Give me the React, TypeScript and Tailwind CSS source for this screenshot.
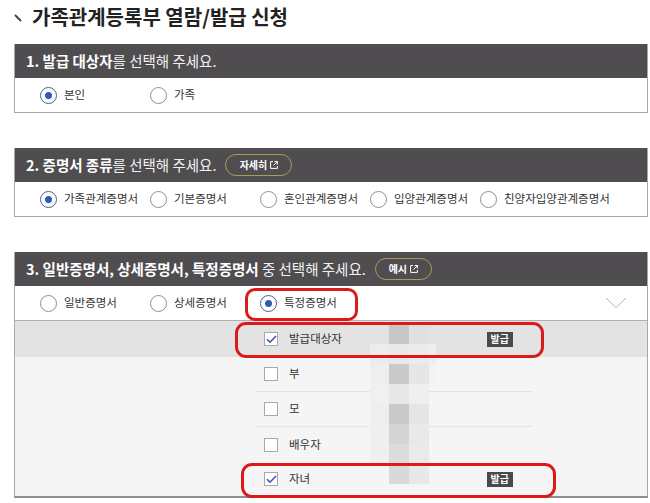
import React from "react";

const FONT = { fontFamily: '"Noto Sans CJK KR", "Noto Sans", sans-serif' };

function Radio({ checked }: { checked?: boolean }) {
  return (
    <span
      className={
        checked
          ? "flex h-[17px] w-[17px] shrink-0 items-center justify-center rounded-full border border-[#4a5f8c] bg-white"
          : "flex h-[17px] w-[17px] shrink-0 items-center justify-center rounded-full border border-[#8f8f8f] bg-white"
      }
    >
      {checked && <span className="h-[7px] w-[7px] rounded-full bg-[#2f5bb5]" />}
    </span>
  );
}

function Option({ label, checked, w = "w-[110px]" }: { label: string; checked?: boolean; w?: string }) {
  return (
    <div className={`flex ${w} shrink-0 items-center gap-[7px]`}>
      <Radio checked={checked} />
      <span className="text-[11.5px] leading-none text-[#333]">{label}</span>
    </div>
  );
}

function ExtIcon() {
  return (
    <svg width="8" height="8" viewBox="0 0 8 8" className="ml-[3px]">
      <path d="M3 0.6H0.6V7.4H7.4V5" fill="none" stroke="#fff" strokeWidth="1" />
      <path d="M4.5 0.6H7.4V3.5M7.4 0.6L3.6 4.4" fill="none" stroke="#fff" strokeWidth="1" />
    </svg>
  );
}

function Pill({ text, w }: { text: string; w: string }) {
  return (
    <span
      className={`ml-[9px] flex h-[22px] ${w} items-center justify-center rounded-full border-[1.5px] border-[#a59d58] text-[10px] font-bold leading-none text-white`}
    >
      {text}
      <ExtIcon />
    </span>
  );
}

function Header({ children }: { children: React.ReactNode }) {
  return (
    <div className="flex h-[34px] items-center bg-[#4f4d50] pl-[11px] text-[14.5px] leading-none text-[#f1f1f1]">
      {children}
    </div>
  );
}

function CheckBox({ checked }: { checked?: boolean }) {
  return (
    <span className="flex h-[14px] w-[14px] shrink-0 items-center justify-center border border-[#a9a9a9] bg-white">
      {checked && (
        <svg width="11" height="9" viewBox="0 0 11 9">
          <path d="M1 4.2L4 7.2L10 1" fill="none" stroke="#3556a8" strokeWidth="1.6" />
        </svg>
      )}
    </span>
  );
}

function ListRow({
  label,
  checked,
  badge,
  h,
  bg,
  line,
}: {
  label: string;
  checked?: boolean;
  badge?: boolean;
  h: string;
  bg: string;
  line?: boolean;
}) {
  return (
    <div className={`${h} ${bg} w-full`}>
      <div
        className={
          line
            ? "ml-[241px] flex h-full w-[276px] items-center border-b border-[#e4e4e4] pl-[8px]"
            : "ml-[241px] flex h-full w-[276px] items-center pl-[8px]"
        }
      >
        <CheckBox checked={checked} />
        <span className="ml-[11px] text-[11.5px] leading-none text-[#333]">{label}</span>
        {badge && (
          <span className="ml-auto mr-[19px] flex h-[15px] items-center bg-[#4a4a4a] px-[4px] text-[10px] font-bold leading-none text-white">
            발급
          </span>
        )}
      </div>
    </div>
  );
}

const mosaic: string[] = [
  "bg-transparent", "bg-[#c7c7c7]", "bg-[#e0e0e0]", "bg-transparent",
  "bg-[#ececec]", "bg-[#e9e9e9]", "bg-[#ebebeb]", "bg-[#eeeeee]",
  "bg-[#eeeeee]", "bg-[#cacaca]", "bg-[#e6e6e6]", "bg-[#f2f2f2]",
  "bg-[#f0f0f0]", "bg-[#e8e8e8]", "bg-[#efefef]", "bg-transparent",
  "bg-[#eeeeee]", "bg-[#c9c9c9]", "bg-[#e5e5e5]", "bg-transparent",
  "bg-[#efefef]", "bg-[#d5d5d5]", "bg-[#e9e9e9]", "bg-transparent",
  "bg-[#efefef]", "bg-[#dcdcdc]", "bg-[#eaeaea]", "bg-transparent",
  "bg-transparent", "bg-[#d9d9d9]", "bg-[#e8e8e8]", "bg-transparent",
];

export default function App() {
  return (
    <div className="relative h-[503px] w-[650px] overflow-hidden bg-white" style={FONT}>
      {/* Title */}
      <div className="flex h-[44px] items-start pt-[5px]">
        <svg width="12" height="12" viewBox="0 0 12 12" className="ml-[13px] mt-[7px]">
          <path d="M2 3L8 9" stroke="#2b3a58" strokeWidth="1.8" />
        </svg>
        <h1 className="ml-[7px] text-[20px] font-bold leading-[24px] text-[#222]">
          가족관계등록부 열람/발급 신청
        </h1>
      </div>

      {/* Section 1 */}
      <div className="ml-[14px] w-[634px] border border-t-0 border-[#a8a8a8]">
        <Header>
          <b className="font-bold text-white">1. 발급 대상자</b>
          <span>를 선택해 주세요.</span>
        </Header>
        <div className="flex h-[34px] items-center pl-[25px]">
          <Option label="본인" checked />
          <Option label="가족" />
        </div>
      </div>

      {/* Section 2 */}
      <div className="ml-[14px] mt-[35px] w-[634px] border border-t-0 border-[#a8a8a8]">
        <Header>
          <b className="font-bold text-white">2. 증명서 종류</b>
          <span>를 선택해 주세요.</span>
          <Pill text="자세히" w="w-[67px]" />
        </Header>
        <div className="flex h-[34px] items-center pl-[25px]">
          <Option label="가족관계증명서" checked />
          <Option label="기본증명서" />
          <Option label="혼인관계증명서" />
          <Option label="입양관계증명서" />
          <Option label="친양자입양관계증명서" w="w-[140px]" />
        </div>
      </div>

      {/* Section 3 */}
      <div className="ml-[14px] mt-[35px] w-[634px] border border-t-0 border-b-2 border-[#a8a8a8] border-b-[#8e8e8e]">
        <Header>
          <b className="font-bold text-white">3. 일반증명서, 상세증명서, 특정증명서</b>
          <span>&nbsp;중 선택해 주세요.</span>
          <Pill text="예시" w="w-[57px]" />
        </Header>
        <div className="flex h-[35px] items-center border-b border-[#b0b0b0] pl-[25px] pr-[20px]">
          <Option label="일반증명서" />
          <Option label="상세증명서" />
          <Option label="특정증명서" checked />
          <svg width="22" height="12" viewBox="0 0 22 12" className="ml-auto">
            <path d="M1 1L11 10.5L21 1" fill="none" stroke="#b5b5b5" strokeWidth="1" />
          </svg>
        </div>
        <div className="bg-[#f5f5f6]">
          <ListRow label="발급대상자" checked badge h="h-[36px]" bg="bg-[#e3e3e4]" />
          <ListRow label="부" h="h-[35px]" bg="bg-[#f5f5f6]" line />
          <ListRow label="모" h="h-[35px]" bg="bg-[#f5f5f6]" line />
          <ListRow label="배우자" h="h-[35px]" bg="bg-[#f5f5f6]" />
          <ListRow label="자녀" checked badge h="h-[34px]" bg="bg-[#f5f5f6]" />
        </div>
      </div>

      {/* Pixelated mosaic overlay */}
      <div className="absolute left-[370px] top-[324px] grid grid-cols-[19px_20px_20px_7px] grid-rows-[repeat(8,20px)]">
        {mosaic.map((c, i) => (
          <div key={i} className={c} />
        ))}
      </div>

      {/* Red annotation outlines */}
      <div className="absolute left-[245px] top-[288px] h-[33px] w-[113px] rounded-[10px] border-[3px] border-[#dc1a1a]" />
      <div className="absolute left-[235px] top-[322px] h-[36px] w-[309px] rounded-[11px] border-[3px] border-[#dc1a1a]" />
      <div className="absolute left-[241px] top-[463px] h-[35px] w-[315px] rounded-[11px] border-[3px] border-[#dc1a1a]" />
    </div>
  );
}
